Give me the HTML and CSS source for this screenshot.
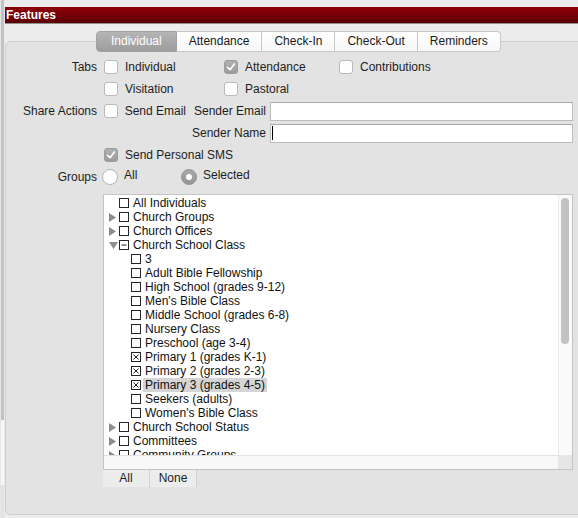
FILE: index.html
```html
<!DOCTYPE html>
<html lang="en">
<head>
    <meta charset="UTF-8">
    <title>Features</title>
    <link rel="stylesheet" href="styles.css">
</head>
<body>
    <div class="window">
        <div class="edge"></div> <!-- scroller of the parent window -->
        <div class="main">
            <div class="title-bar">Features</div>

            <div class="features-box">
                <div class="tabs">
                    <div class="tab selected">Individual</div>
                    <div class="tab">Attendance</div>
                    <div class="tab">Check-In</div>
                    <div class="tab">Check-Out</div>
                    <div class="tab">Reminders</div>
                </div>

                <div class="form">
                    <div class="row">
                        <div class="label">Tabs</div>
                        <div class="check w-first"><span class="cb"></span>Individual</div>
                        <div class="check w-second"><span class="cb checked"><svg width="12" height="12" viewBox="0 0 12 12"><path d="M2.6 6.4 L5 8.8 L9.4 3" fill="none" stroke="#fff" stroke-width="1.6" stroke-linecap="round" stroke-linejoin="round"/></svg></span>Attendance</div>
                        <div class="check"><span class="cb"></span>Contributions</div>
                    </div>
                    <div class="row">
                        <div class="label"></div>
                        <div class="check w-first"><span class="cb"></span>Visitation</div>
                        <div class="check w-second"><span class="cb"></span>Pastoral</div>
                    </div>
                    <div class="row">
                        <div class="label">Share Actions</div>
                        <div class="check w-email"><span class="cb"></span>Send Email</div>
                        <div class="field-label">Sender Email</div>
                        <div class="text-field"></div>
                    </div>
                    <div class="row">
                        <div class="label"></div>
                        <div class="w-email"></div>
                        <div class="field-label">Sender Name</div>
                        <div class="text-field"><span class="caret"></span></div>
                    </div>
                    <div class="row">
                        <div class="label"></div>
                        <div class="check"><span class="cb checked"><svg width="12" height="12" viewBox="0 0 12 12"><path d="M2.6 6.4 L5 8.8 L9.4 3" fill="none" stroke="#fff" stroke-width="1.6" stroke-linecap="round" stroke-linejoin="round"/></svg></span>Send Personal SMS</div>
                    </div>
                    <div class="row">
                        <div class="label">Groups</div>
                        <div class="check w-radio"><span class="radio"></span><span class="radio-text">All</span></div>
                        <div class="check"><span class="radio on"><span class="dot"></span></span><span class="radio-text">Selected</span></div>
                    </div>
                </div>

                <div class="tree-box">
                    <div class="tree-list">
                        <div class="tree-row"><span class="twisty"></span><span class="tcb"></span>All Individuals</div>
                        <div class="tree-row"><span class="twisty"><svg width="7" height="9" viewBox="0 0 7 9"><path d="M0 0 L7 4.5 L0 9 Z" fill="#8c8c8c"/></svg></span><span class="tcb"></span>Church Groups</div>
                        <div class="tree-row"><span class="twisty"><svg width="7" height="9" viewBox="0 0 7 9"><path d="M0 0 L7 4.5 L0 9 Z" fill="#8c8c8c"/></svg></span><span class="tcb"></span>Church Offices</div>
                        <div class="tree-row"><span class="twisty"><svg width="9" height="7" viewBox="0 0 9 7"><path d="M0 0 L9 0 L4.5 7 Z" fill="#8c8c8c"/></svg></span><span class="tcb"><svg width="8" height="8" viewBox="0 0 8 8"><path d="M1.5 4 H6.5" stroke="#222" stroke-width="1"/></svg></span>Church School Class</div>
                        <div class="tree-row lvl-1"><span class="twisty"></span><span class="tcb"></span>3</div>
                        <div class="tree-row lvl-1"><span class="twisty"></span><span class="tcb"></span>Adult Bible Fellowship</div>
                        <div class="tree-row lvl-1"><span class="twisty"></span><span class="tcb"></span>High School (grades 9-12)</div>
                        <div class="tree-row lvl-1"><span class="twisty"></span><span class="tcb"></span>Men's Bible Class</div>
                        <div class="tree-row lvl-1"><span class="twisty"></span><span class="tcb"></span>Middle School (grades 6-8)</div>
                        <div class="tree-row lvl-1"><span class="twisty"></span><span class="tcb"></span>Nursery Class</div>
                        <div class="tree-row lvl-1"><span class="twisty"></span><span class="tcb"></span>Preschool (age 3-4)</div>
                        <div class="tree-row lvl-1"><span class="twisty"></span><span class="tcb"><svg width="8" height="8" viewBox="0 0 8 8"><path d="M1.5 1.5 L6.5 6.5 M6.5 1.5 L1.5 6.5" stroke="#222" stroke-width="1"/></svg></span>Primary 1 (grades K-1)</div>
                        <div class="tree-row lvl-1"><span class="twisty"></span><span class="tcb"><svg width="8" height="8" viewBox="0 0 8 8"><path d="M1.5 1.5 L6.5 6.5 M6.5 1.5 L1.5 6.5" stroke="#222" stroke-width="1"/></svg></span>Primary 2 (grades 2-3)</div>
                        <div class="tree-row lvl-1"><span class="twisty"></span><span class="tcb"><svg width="8" height="8" viewBox="0 0 8 8"><path d="M1.5 1.5 L6.5 6.5 M6.5 1.5 L1.5 6.5" stroke="#222" stroke-width="1"/></svg></span><span class="highlight">Primary 3 (grades 4-5)</span></div>
                        <div class="tree-row lvl-1"><span class="twisty"></span><span class="tcb"></span>Seekers (adults)</div>
                        <div class="tree-row lvl-1"><span class="twisty"></span><span class="tcb"></span>Women's Bible Class</div>
                        <div class="tree-row"><span class="twisty"><svg width="7" height="9" viewBox="0 0 7 9"><path d="M0 0 L7 4.5 L0 9 Z" fill="#8c8c8c"/></svg></span><span class="tcb"></span>Church School Status</div>
                        <div class="tree-row"><span class="twisty"><svg width="7" height="9" viewBox="0 0 7 9"><path d="M0 0 L7 4.5 L0 9 Z" fill="#8c8c8c"/></svg></span><span class="tcb"></span>Committees</div>
                        <div class="tree-row"><span class="twisty"><svg width="7" height="9" viewBox="0 0 7 9"><path d="M0 0 L7 4.5 L0 9 Z" fill="#8c8c8c"/></svg></span><span class="tcb"></span>Community Groups</div>
                    </div>
                    <div class="v-scroll"><div class="thumb"></div></div>
                    <div class="h-scroll"></div>
                    <div class="corner"></div>
                </div>

                <div class="list-buttons">
                    <div class="list-btn">All</div>
                    <div class="list-btn">None</div>
                </div>
            </div>
        </div>
    </div>
</body>
</html>
```

FILE: styles.css
```css
body {
    margin: 0;
    padding: 0;
    background-color: #ececec;
    font-family: "Liberation Sans", Arial, sans-serif;
    font-size: 12px;
    color: #1d1d1d;
    overflow: hidden;
}

.window {
    display: flex;
    height: 518px;
}

/* bande grise a gauche */
.edge {
    width: 3px;
    flex: none;
    border-left: 1px solid #e6e6e6;
    border-right: 1px solid #e9e9e9;
    background: linear-gradient(to bottom, #c3c3c3 0, #c3c3c3 420px, #f6f6f6 420px, #f6f6f6 485px, #e3e3e3 485px);
}

.main {
    flex: 1;
    min-width: 0;
    padding-top: 7px;
}

.title-bar {
    height: 16px;
    line-height: 16px;
    padding-left: 1px;
    background: linear-gradient(#900009, #5a0005);
    border-bottom: 1px solid #8f8f8f;
    color: #fff;
    font-weight: bold;
}

.features-box {
    margin-top: 17px;
    margin-right: -14px;
    padding: 0 18px 27px 0;
    height: 474px;
    box-sizing: border-box;
    background-color: #e3e3e3;
    border: 1px solid #cfcfcf;
    border-radius: 5px;
}

.tabs {
    display: flex;
    width: fit-content;
    margin: -11px 0 0 90px;
}

.tab {
    height: 19px;
    line-height: 19px;
    padding: 0 12px;
    background: linear-gradient(#ffffff, #f7f7f7);
    border: 1px solid #c8c8c8;
    border-left: none;
    color: #1a1a1a;
}

.tab:first-child {
    border-left: 1px solid #c8c8c8;
    border-radius: 4px 0 0 4px;
    padding: 0 14px;
}

.tab:last-child {
    border-radius: 0 4px 4px 0;
}

.tab.selected {
    background: linear-gradient(#b5b5b5, #9d9d9d);
    border-color: #a2a2a2;
    color: #fff;
}

.form {
    margin-top: 4px;
}

.row {
    display: flex;
    align-items: center;
    height: 22px;
    white-space: nowrap;
}

.label {
    width: 91px;
    flex: none;
    margin-right: 7px;
    text-align: right;
}

.check {
    display: flex;
    align-items: center;
    flex: none;
}

.w-first { width: 120px; }
.w-second { width: 115px; }
.w-email { width: 82px; flex: none; }
.w-radio { width: 79px; }

.cb {
    width: 14px;
    height: 14px;
    box-sizing: border-box;
    margin-right: 7px;
    background-color: #fff;
    border: 1px solid #b9b9b9;
    border-radius: 3px;
    display: flex;
    align-items: center;
    justify-content: center;
}

.cb.checked {
    background: linear-gradient(#b0b0b0, #9c9c9c);
    border-color: #9a9a9a;
}

.radio {
    width: 16px;
    height: 16px;
    box-sizing: border-box;
    margin: 0 6px 0 -2px;
    border-radius: 50%;
    background-color: #fff;
    border: 1px solid #b5b5b5;
    display: flex;
    align-items: center;
    justify-content: center;
}

.radio.on {
    background: linear-gradient(#a8a8a8, #969696);
    border-color: #939393;
}

.radio .dot {
    width: 6px;
    height: 6px;
    border-radius: 50%;
    background-color: #fff;
}

.radio-text {
    margin-top: -4px;
}

.field-label {
    width: 80px;
    flex: none;
    margin-right: 4px;
    text-align: right;
}

.text-field {
    flex: 1;
    height: 19px;
    box-sizing: border-box;
    background-color: #fff;
    border: 1px solid #bdbdbd;
    border-top-color: #a9a9a9;
    display: flex;
    align-items: center;
    padding-left: 1px;
}

.caret {
    width: 1px;
    height: 14px;
    background-color: #000;
}

.tree-box {
    margin: 6px 0 0 97px;
    height: 276px;
    box-sizing: border-box;
    border: 1px solid #c4c4c4;
    background-color: #fff;
    display: grid;
    grid-template-columns: 1fr 14px;
    grid-template-rows: 1fr 14px;
}

.tree-list {
    overflow: hidden;
    color: #111;
    padding-top: 1px;
}

.tree-row {
    display: flex;
    align-items: center;
    height: 14px;
    padding-left: 5px;
    white-space: nowrap;
}

.tree-row.lvl-1 {
    padding-left: 17px;
}

.twisty {
    width: 10px;
    flex: none;
    display: flex;
    align-items: center;
}

.tcb {
    width: 10px;
    height: 10px;
    box-sizing: border-box;
    flex: none;
    margin-right: 4px;
    border: 1px solid #262626;
    background-color: #fff;
    display: flex;
    align-items: center;
    justify-content: center;
}

.highlight {
    background-color: #d5d5d5;
    line-height: 14px;
    padding: 0 2px;
    margin-left: -2px;
}

.v-scroll {
    background-color: #fafafa;
    border-left: 1px solid #ebebeb;
}

.thumb {
    width: 8px;
    height: 146px;
    margin: 3px 0 0 2px;
    border-radius: 4px;
    background-color: #c2c2c2;
}

.h-scroll {
    background-color: #f8f8f8;
    border-top: 1px solid #e2e2e2;
}

.corner {
    background-color: #e6e6e6;
}

.list-buttons {
    display: flex;
    margin-left: 97px;
}

.list-btn {
    width: 46px;
    height: 17px;
    line-height: 17px;
    text-align: center;
    background-color: #ececec;
    border-right: 1px solid #d3d3d3;
}
```
